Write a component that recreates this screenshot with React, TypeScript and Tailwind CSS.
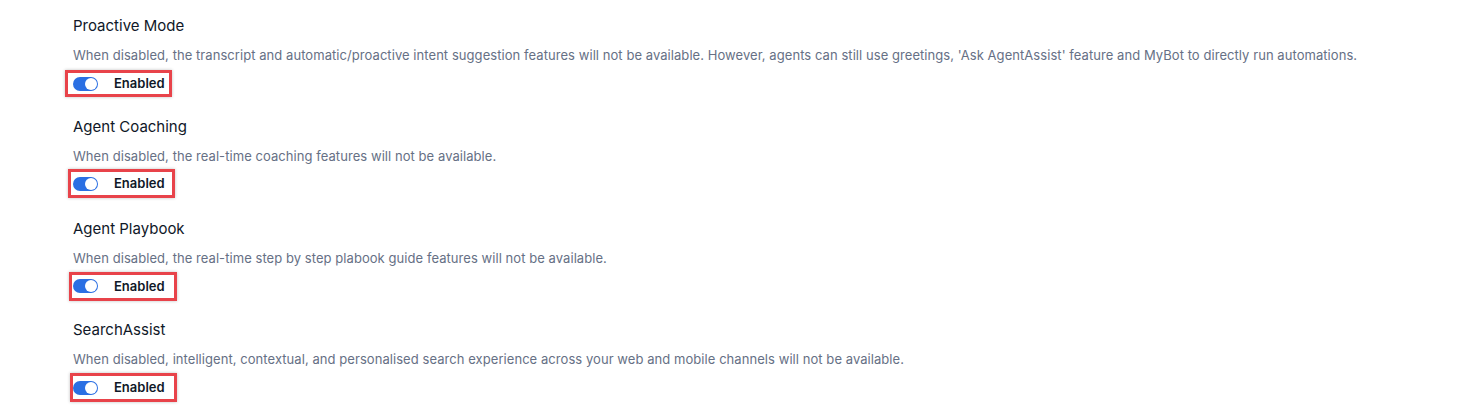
import React from "react";

type Feature = {
  title: string;
  description: string;
  box: string;
};

const features: Feature[] = [
  {
    title: "Proactive Mode",
    description:
      "When disabled, the transcript and automatic/proactive intent suggestion features will not be available. However, agents can still use greetings, 'Ask AgentAssist' feature and MyBot to directly run automations.",
    box: "mt-[6px] ml-[-8px] h-[27px] w-[107px] pl-[5px]",
  },
  {
    title: "Agent Coaching",
    description: "When disabled, the real-time coaching features will not be available.",
    box: "mt-[4px] ml-[-5px] h-[29px] w-[107px] pl-[2px]",
  },
  {
    title: "Agent Playbook",
    description:
      "When disabled, the real-time step by step plabook guide features will not be available.",
    box: "mt-[5px] ml-[-4px] h-[29px] w-[108px] pl-[1px]",
  },
  {
    title: "SearchAssist",
    description:
      "When disabled, intelligent, contextual, and personalised search experience across your web and mobile channels will not be available.",
    box: "mt-[5px] ml-[-3px] h-[29px] w-[107px] pl-[0px]",
  },
];

const Toggle = () => (
  <span className="relative inline-flex h-[14px] w-[25px] items-center rounded-full bg-[#2b6fe3]">
    <span className="absolute right-[1px] h-[12px] w-[12px] rounded-full bg-white" />
  </span>
);

export default function App() {
  return (
    <div
      className="h-[409px] w-full bg-white pl-[73px] pt-[16px] text-[#101828]"
      style={{ fontFamily: "Inter, 'Noto Sans', sans-serif" }}
    >
      {features.map((f) => (
        <section key={f.title} className="flex h-[101.4px] flex-col items-start">
          <h2 className="text-[15px] leading-[20px] font-normal text-[#101828]">{f.title}</h2>
          <p className="mt-[10px] text-[13px] leading-[18px] tracking-[0.06px] text-[#667085]">
            {f.description}
          </p>
          <div
            className={
              "flex items-center gap-[16px] border-[3px] border-[#e8434a] bg-white shadow-[0_0_3px_rgba(0,0,0,0.25)] " +
              f.box
            }
          >
            <Toggle />
            <span className="text-[13px] font-semibold leading-none text-[#101828]">Enabled</span>
          </div>
        </section>
      ))}
    </div>
  );
}
